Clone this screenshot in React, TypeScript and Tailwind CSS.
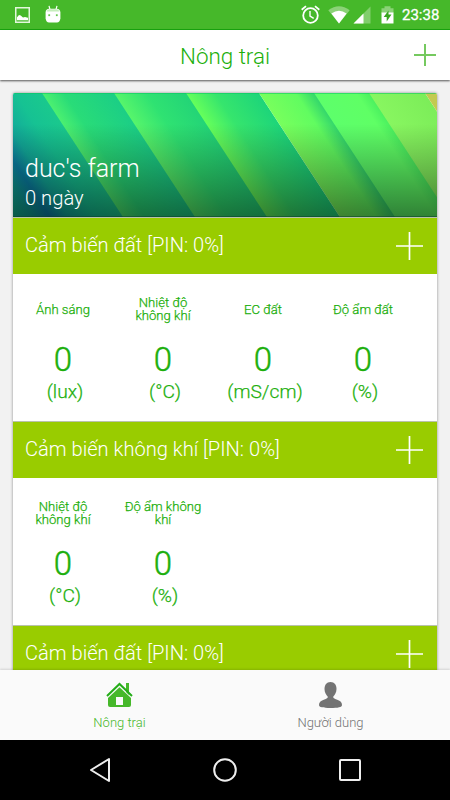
import React from "react";

type Reading = { label: string; unit: string };

const soilReadings: Reading[] = [
  { label: "Ánh sáng", unit: "(lux)" },
  { label: "Nhiệt độ không khí", unit: "(°C)" },
  { label: "EC đất", unit: "(mS/cm)" },
  { label: "Độ ẩm đất", unit: "(%)" },
];

const airReadings: Reading[] = [
  { label: "Nhiệt độ không khí", unit: "(°C)" },
  { label: "Độ ẩm không khí", unit: "(%)" },
];

function StatusBar() {
  return (
    <div className="flex h-[30px] shrink-0 items-center border-b border-[#1aa80f] bg-[#46b82a] pr-[9px] pl-[15px] text-white">
      <svg width="15" height="16" viewBox="0 0 15 16" className="mt-[1px]">
        <rect x=".75" y=".75" width="13.5" height="14.5" fill="none" stroke="#e3f7dc" strokeWidth="1.5" />
        <path d="M2 13.3V10.2L4 8l1.7.6L8 10.5l2-.5 3 .7v2.6Z" fill="white" />
      </svg>
      <svg width="16" height="18" viewBox="0 0 16 18" className="ml-[15px] -mt-[2px]">
        <path d="M4 .8l1.1 4M12 .8l-1.1 4" stroke="white" strokeWidth="1.2" />
        <path d="M.6 7Q1.5 3.8 4 3.8h8q2.500 0 3.400 3.200v6.500Q14.800 17.600 12 17.600H4Q1.200 17.600.6 13.500Z" fill="white" />
        <path d="M1.500 6.500Q2.500 4.200 4.500 4.200h7q2 0 3 2.300Z" fill="#c5edbb" />
        <rect x="3.300" y="9.300" width="1.800" height="1.800" fill="#62c74c" />
        <rect x="10.900" y="9.300" width="1.800" height="1.800" fill="#62c74c" />
      </svg>
      <div className="grow" />
      <svg width="19" height="19" viewBox="0 0 19 19" fill="none" stroke="white" strokeWidth="1.8">
        <circle cx="9.500" cy="10.500" r="7.300" />
        <path d="M.7 4.700 5 1.100M18.300 4.700 14 1.100" />
        <path d="M9 6v5l3.700 2.400" strokeWidth="1.400" />
      </svg>
      <svg width="22" height="18" viewBox="0 0 22 18" className="ml-[8px]">
        <path d="M.3 4.200Q11-3.800 21.700 4.200L11 17.500Z" fill="#8bd277" />
        <path d="M3.400 7.500Q11 2 18.600 7.500L11 17.500Z" fill="white" />
      </svg>
      <svg width="18" height="18" viewBox="0 0 18 18" className="ml-[3px]">
        <path d="M17.500 .5v17H.5Z" fill="#81ce6d" />
        <path d="M10.500 7.500v10H.5Z" fill="white" />
      </svg>
      <svg width="13" height="18" viewBox="0 0 13 18" className="ml-[10px]">
        <path d="M.5 2.300h3V.3h6v2h3v5H.5Z" fill="#8bd277" />
        <path d="M.5 6.500h12v11H.5Z" fill="white" />
        <path d="M7.500 4.500 2.700 11h3v4.500l4.800-7H7.500Z" fill="#38a51f" />
      </svg>
      <span className="mt-[1px] ml-[8px] w-[39px] text-[15px] leading-5 whitespace-nowrap [-webkit-text-stroke:0.3px]">23:38</span>
    </div>
  );
}

function Banner() {
  return (
    <div className="relative h-[124px]">
      <svg className="block h-full w-full" viewBox="0 0 424 124" preserveAspectRatio="none">
        <defs>
          <linearGradient id="left">
            <stop offset="0" stopColor="#12b58c" />
            <stop offset=".2" stopColor="#0e9a94" />
            <stop offset=".34" stopColor="#0a80a5" />
            <stop offset=".5" stopColor="#12a99a" />
            <stop offset=".75" stopColor="#16c293" />
            <stop offset="1" stopColor="#1ac98d" />
          </linearGradient>
          <linearGradient id="a">
            <stop offset="0" stopColor="#4cf070" />
            <stop offset=".3" stopColor="#29dc78" />
            <stop offset="1" stopColor="#1bce86" />
          </linearGradient>
          <linearGradient id="b">
            <stop offset="0" stopColor="#57f56b" />
            <stop offset=".45" stopColor="#2fe272" />
            <stop offset="1" stopColor="#23d477" />
          </linearGradient>
          <linearGradient id="c">
            <stop offset="0" stopColor="#66ff5b" />
            <stop offset=".4" stopColor="#36e56d" />
            <stop offset="1" stopColor="#1dd57a" />
          </linearGradient>
          <linearGradient id="d">
            <stop offset="0" stopColor="#78ff5d" />
            <stop offset=".65" stopColor="#61fc60" />
            <stop offset="1" stopColor="#32d56c" />
          </linearGradient>
          <linearGradient id="e">
            <stop offset="0" stopColor="#5dff6b" />
            <stop offset=".75" stopColor="#5fff65" />
            <stop offset="1" stopColor="#4af05f" />
          </linearGradient>
          <linearGradient id="f">
            <stop offset="0" stopColor="#88f660" />
            <stop offset="1" stopColor="#7ced59" />
          </linearGradient>
          <linearGradient id="shade" x1="0" y1="0" x2="0" y2="1">
            <stop offset="0" stopOpacity="0" />
            <stop offset=".25" stopOpacity="0" />
            <stop offset="1" stopOpacity=".49" />
          </linearGradient>
        </defs>
        <g transform="matrix(1 0 .653 1 0 0)">
          <rect x="-82" width="112" height="124" fill="url(#left)" />
          <rect x="29" width="73" height="124" fill="url(#a)" />
          <rect x="101" width="73" height="124" fill="url(#b)" />
          <rect x="173" width="73" height="124" fill="url(#c)" />
          <rect x="246" width="56" height="124" fill="url(#d)" />
          <rect x="301" width="56" height="124" fill="url(#e)" />
          <rect x="356" width="56" height="124" fill="url(#f)" />
          <rect x="412" width="40" height="124" fill="#c3ca50" />
        </g>
        <rect width="424" height="124" fill="url(#shade)" />
        <rect width="424" height="1" fill="#08c95f" opacity=".55" />
        <rect y="123" width="424" height="1" fill="#083d2a" opacity=".5" />
      </svg>
      <div className="absolute inset-x-[12px] bottom-[5px] text-white">
        <div className="text-[25px] leading-[32px] font-light">duc's farm</div>
        <div className="text-[20.2px] leading-[27px] font-light">0 ngày</div>
      </div>
    </div>
  );
}

function Plus({ header = false }: { header?: boolean }) {
  return header ? (
    <svg width="22" height="22" viewBox="0 0 22 22" stroke="#75c95f" strokeWidth="2">
      <path d="M11 0v22M0 11h22" />
    </svg>
  ) : (
    <svg width="27" height="28" viewBox="0 0 27 28" stroke="white" strokeWidth="1.7">
      <path d="M13.500 0v28M0 14h27" />
    </svg>
  );
}

function Section({ title, readings }: { title: string; readings?: Reading[] }) {
  return (
    <section>
      <div className="flex h-[57px] items-center justify-between border-t border-[#b9c2ac] bg-[#99cc00] pr-[14px] pl-[12px] text-white">
        <h2 className="mt-[-3px] text-[20.1px] leading-7 font-light">{title}</h2>
        <Plus />
      </div>
      {readings && (
        <div className="grid h-[147px] grid-cols-[repeat(4,100px)] text-center font-light text-[#1caf0c] [-webkit-text-stroke:0.25px]">
          {readings.map(({ label, unit }) => (
            <div key={label} className="flex flex-col items-center pt-[22px]">
              <div className="flex h-[26px] w-[80px] items-center justify-center text-[13.1px] leading-[13px]">{label}</div>
              <div className="mt-[19px] text-[33px] leading-[38px] [-webkit-text-stroke:0.45px]">0</div>
              <div className="ml-[4px] text-[19.2px] leading-[26px] whitespace-nowrap">{unit}</div>
            </div>
          ))}
        </div>
      )}
    </section>
  );
}

function BottomTabs() {
  return (
    <nav className="relative z-10 flex h-[70px] shrink-0 justify-center bg-[#fafafa] px-[14px] text-[13px] leading-[18px] font-light shadow-[0_-1px_2px_rgba(0,0,0,.13)]">
      <div className="flex w-1/2 flex-col items-center pt-[12px] text-[#46b82a]">
        <svg width="27" height="26" viewBox="0 0 27 26">
          <path d="M20 1h3v12l-3-3Z" fill="#46b82a" />
          <path d="M1 14 13.500 2 26 14" fill="none" stroke="#24ad18" strokeWidth="2" />
          <path d="M2 16 13.500 5.300 25 16v7q0 2-2 2H4q-2 0-2-2Z" fill="#46b82a" />
          <path d="M10 15h7v8h-7Z" fill="#fafafa" />
        </svg>
        <span className="mt-[6px]">Nông trại</span>
      </div>
      <div className="flex w-1/2 flex-col items-center pt-[12px] text-[#737373]">
        <svg width="23" height="26" viewBox="0 0 23 26" fill="currentColor">
          <path d="M11.500 0C7.500 0 5.500 3 5.500 7c0 3.800 1.800 5.800 3.200 7.600.3 1.900-.9 2-3.900 3.100C1.500 18.800 0 20.500 0 23c0 2.200 4 3 11.500 3S23 25.200 23 23c0-2.500-1.500-4.200-4.800-5.300-3-1.100-4.200-1.200-3.900-3.100C15.700 12.800 17.500 10.800 17.500 7c0-4-2-7-6-7Z" />
        </svg>
        <span className="mt-[6px]">Người dùng</span>
      </div>
    </nav>
  );
}

export default function App() {
  return (
    <div className="flex h-[800px] w-[450px] flex-col overflow-hidden bg-[#f2f2f2] font-['Roboto','Noto_Sans',sans-serif]">
      <StatusBar />
      <header className="grid h-[50px] shrink-0 grid-cols-[1fr_auto_1fr] items-center bg-white px-[14px] shadow-[0_1px_2px_rgba(0,0,0,.65)]">
        <h1 className="col-start-2 mt-[1px] text-[22.4px] leading-[30px] font-light text-[#1caf0c]">Nông trại</h1>
        <div className="justify-self-end"><Plus header /></div>
      </header>
      <main className="min-h-0 grow overflow-hidden px-[13px] pt-[13px]">
        <article className="h-[600px] overflow-hidden rounded-t-[2px] bg-white shadow-[0_0_3px_rgba(0,0,0,.45)]">
          <Banner />
          <Section title="Cảm biến đất [PIN: 0%]" readings={soilReadings} />
          <Section title="Cảm biến không khí [PIN: 0%]" readings={airReadings} />
          <Section title="Cảm biến đất [PIN: 0%]" />
        </article>
      </main>
      <BottomTabs />
      <footer className="flex h-[60px] shrink-0 items-center justify-center gap-[102px] bg-black">
        <svg width="22" height="26" viewBox="0 0 22 26" fill="none" stroke="#eee" strokeWidth="2" strokeLinejoin="round">
          <path d="M20 2v22L2 13Z" />
        </svg>
        <svg width="24" height="24" viewBox="0 0 24 24" fill="none" stroke="#eee" strokeWidth="2">
          <circle cx="12" cy="12" r="10.800" />
        </svg>
        <svg width="22" height="22" viewBox="0 0 22 22" fill="none" stroke="#eee" strokeWidth="2">
          <rect x="1" y="1" width="20" height="20" rx="1" />
        </svg>
      </footer>
    </div>
  );
}
